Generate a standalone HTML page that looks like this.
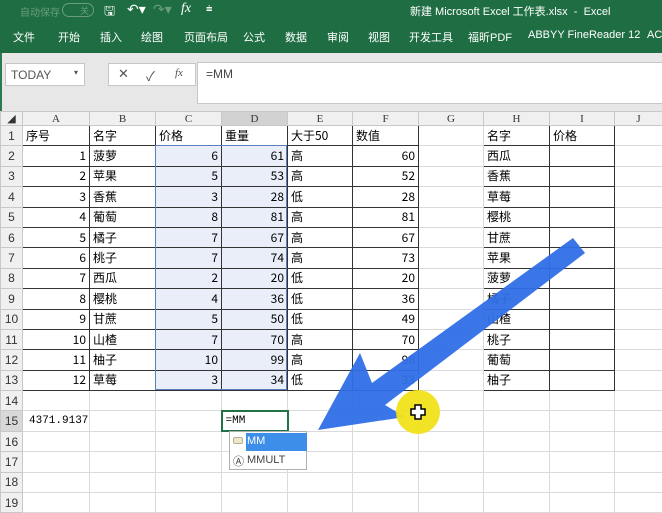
<!DOCTYPE html>
<html><head><meta charset="utf-8"><style>
*{margin:0;padding:0;box-sizing:border-box}
body{width:662px;height:511px;overflow:hidden;position:relative;background:#fff;font-family:"Liberation Sans","Noto Sans CJK SC",sans-serif}
.top{position:absolute;left:0;top:0;width:662px;height:53px;background:#1f6e43;color:#fff;font-size:11px}
.top span{position:absolute}
.fb{position:absolute;left:0;top:53px;width:662px;height:58px;background:#e7e7e7}
table{position:absolute;left:0;top:111px;width:662px;border-collapse:collapse;table-layout:fixed;font-family:"Noto Sans CJK SC",sans-serif;font-size:12px}
td{height:20.4px;border:1px solid #dadada;padding:0 3px;white-space:nowrap;overflow:hidden;line-height:18px}
tr.h td{height:14px;background:#f0f0f0;text-align:center;font-family:"Liberation Serif",serif;font-size:11px;color:#333;border-color:#c8c8c8;line-height:12px}
td.rh{background:#f0f0f0;text-align:center;font-size:12px;color:#333;font-family:"Liberation Sans",sans-serif;padding:0;border-color:#c8c8c8}
td.b{border:1px solid #333}
td.n{text-align:right}
td.s{background:#e9eef8}
</style></head><body>
<div class="top">
<span style="left:20px;top:4px;color:#6a9c7e;font-size:10px">自动保存</span>
<span style="left:62px;top:3px;width:32px;height:14px;border:1px solid #6a9c7e;border-radius:7px;color:#6a9c7e;font-size:9px;text-align:right;padding-right:4px">关</span>
<span style="left:104px;top:2px;font-size:13px">🖫</span>
<span style="left:127px;top:1px;font-size:14px">↶▾</span>
<span style="left:153px;top:1px;font-size:14px;color:#6a9c7e">↷▾</span>
<span style="left:181px;top:1px;font-size:14px;font-style:italic;font-family:'Liberation Serif',serif">fx</span>
<span style="left:206px;top:3px">⩧</span>
<span style="left:410px;top:3px">新建 Microsoft Excel 工作表.xlsx &nbsp;- &nbsp;Excel</span>
<span style="left:13px;top:29px">文件</span><span style="left:58px;top:29px">开始</span><span style="left:100px;top:29px">插入</span><span style="left:141px;top:29px">绘图</span><span style="left:184px;top:29px">页面布局</span><span style="left:243px;top:29px">公式</span><span style="left:285px;top:29px">数据</span><span style="left:327px;top:29px">审阅</span><span style="left:368px;top:29px">视图</span><span style="left:409px;top:29px">开发工具</span><span style="left:468px;top:29px">福昕PDF</span><span style="left:528px;top:29px">ABBYY FineReader 12</span><span style="left:647px;top:29px">AC</span>
</div>
<div class="fb">
<div style="position:absolute;left:5px;top:10px;width:80px;height:23px;background:#fff;border:1px solid #c6c6c6;font-size:12px;color:#555;padding:4px 5px">TODAY<span style="position:absolute;right:6px;top:4px;font-size:8px">▾</span></div>
<div style="position:absolute;left:108px;top:10px;width:88px;height:23px;background:#fff;border:1px solid #c6c6c6;font-size:13px;color:#555"><span style="position:absolute;left:9px;top:2px">✕</span><span style="position:absolute;left:37px;top:2px">✓</span><span style="position:absolute;left:66px;top:3px;font-style:italic;font-size:11px;font-family:'Liberation Serif',serif">fx</span></div>
<div style="position:absolute;left:197px;top:9px;width:470px;height:42px;background:#fff;border:1px solid #c6c6c6;font-size:12px;color:#444;padding:4px 8px">=MM</div>
</div>
<div style="position:absolute;left:0;top:53px;width:2px;height:458px;background:#2c7a4e"></div>
<table>
<colgroup><col style="width:22px"><col style="width:67px"><col style="width:66px"><col style="width:66px"><col style="width:66px"><col style="width:65px"><col style="width:66px"><col style="width:65px"><col style="width:66px"><col style="width:65px"><col style="width:48px"></colgroup>
<tr class="h"><td>◢</td><td>A</td><td>B</td><td>C</td><td style="background:#d2d2d2">D</td><td>E</td><td>F</td><td>G</td><td>H</td><td>I</td><td>J</td></tr>
<tr><td class="rh">1</td><td class="b">序号</td><td class="b">名字</td><td class="b">价格</td><td class="b">重量</td><td class="b">大于50</td><td class="b">数值</td><td></td><td class="b">名字</td><td class="b">价格</td><td></td></tr>
<tr><td class="rh">2</td><td class="b n">1</td><td class="b">菠萝</td><td class="b n s">6</td><td class="b n s">61</td><td class="b">高</td><td class="b n">60</td><td></td><td class="b">西瓜</td><td class="b"></td><td></td></tr>
<tr><td class="rh">3</td><td class="b n">2</td><td class="b">苹果</td><td class="b n s">5</td><td class="b n s">53</td><td class="b">高</td><td class="b n">52</td><td></td><td class="b">香蕉</td><td class="b"></td><td></td></tr>
<tr><td class="rh">4</td><td class="b n">3</td><td class="b">香蕉</td><td class="b n s">3</td><td class="b n s">28</td><td class="b">低</td><td class="b n">28</td><td></td><td class="b">草莓</td><td class="b"></td><td></td></tr>
<tr><td class="rh">5</td><td class="b n">4</td><td class="b">葡萄</td><td class="b n s">8</td><td class="b n s">81</td><td class="b">高</td><td class="b n">81</td><td></td><td class="b">樱桃</td><td class="b"></td><td></td></tr>
<tr><td class="rh">6</td><td class="b n">5</td><td class="b">橘子</td><td class="b n s">7</td><td class="b n s">67</td><td class="b">高</td><td class="b n">67</td><td></td><td class="b">甘蔗</td><td class="b"></td><td></td></tr>
<tr><td class="rh">7</td><td class="b n">6</td><td class="b">桃子</td><td class="b n s">7</td><td class="b n s">74</td><td class="b">高</td><td class="b n">73</td><td></td><td class="b">苹果</td><td class="b"></td><td></td></tr>
<tr><td class="rh">8</td><td class="b n">7</td><td class="b">西瓜</td><td class="b n s">2</td><td class="b n s">20</td><td class="b">低</td><td class="b n">20</td><td></td><td class="b">菠萝</td><td class="b"></td><td></td></tr>
<tr><td class="rh">9</td><td class="b n">8</td><td class="b">樱桃</td><td class="b n s">4</td><td class="b n s">36</td><td class="b">低</td><td class="b n">36</td><td></td><td class="b">橘子</td><td class="b"></td><td></td></tr>
<tr><td class="rh">10</td><td class="b n">9</td><td class="b">甘蔗</td><td class="b n s">5</td><td class="b n s">50</td><td class="b">低</td><td class="b n">49</td><td></td><td class="b">山楂</td><td class="b"></td><td></td></tr>
<tr><td class="rh">11</td><td class="b n">10</td><td class="b">山楂</td><td class="b n s">7</td><td class="b n s">70</td><td class="b">高</td><td class="b n">70</td><td></td><td class="b">桃子</td><td class="b"></td><td></td></tr>
<tr><td class="rh">12</td><td class="b n">11</td><td class="b">柚子</td><td class="b n s">10</td><td class="b n s">99</td><td class="b">高</td><td class="b n">98</td><td></td><td class="b">葡萄</td><td class="b"></td><td></td></tr>
<tr><td class="rh">13</td><td class="b n">12</td><td class="b">草莓</td><td class="b n s">3</td><td class="b n s">34</td><td class="b">低</td><td class="b n">33</td><td></td><td class="b">柚子</td><td class="b"></td><td></td></tr>
<tr><td class="rh">14</td><td></td><td></td><td></td><td></td><td></td><td></td><td></td><td></td><td></td><td></td></tr>
<tr><td class="rh" style="background:#d8d8d8">15</td><td style="font-family:'Liberation Mono',monospace;font-size:11px;padding-left:6px">4371.9137</td><td></td><td></td><td style="border:2px solid #217346;font-family:'Liberation Mono',monospace;font-size:11px">=MM</td><td></td><td></td><td></td><td></td><td></td><td></td></tr>
<tr><td class="rh">16</td><td></td><td></td><td></td><td></td><td></td><td></td><td></td><td></td><td></td><td></td></tr>
<tr><td class="rh">17</td><td></td><td></td><td></td><td></td><td></td><td></td><td></td><td></td><td></td><td></td></tr>
<tr><td class="rh">18</td><td></td><td></td><td></td><td></td><td></td><td></td><td></td><td></td><td></td><td></td></tr>
<tr><td class="rh">19</td><td></td><td></td><td></td><td></td><td></td><td></td><td></td><td></td><td></td><td></td></tr>
</table>
<div style="position:absolute;left:155px;top:145px;width:132px;height:245px;border:1px solid #5a7fbf"></div>
<div style="position:absolute;left:229px;top:431px;width:78px;height:39px;background:#fff;border:1px solid #b0b0b0;font-size:11px;color:#444">
<div style="position:absolute;left:16px;top:1px;width:61px;height:18px;background:#3d8ee8;color:#fff;padding:2px 1px">MM</div>
<div style="position:absolute;left:3px;top:5px;width:10px;height:7px;border:1px solid #b8b090;border-radius:2px;background:#eee8c8"></div>
<div style="position:absolute;left:3px;top:21px;font-size:11px">Ⓐ</div>
<div style="position:absolute;left:17px;top:22px">MMULT</div>
</div>
<svg style="position:absolute;left:0;top:0" width="662" height="511">
<polygon points="573,238 585,253 385,405 405,417 318,430 360,353 372,383" fill="#2f6fe6" opacity="0.95"/>
<circle cx="418" cy="412" r="22" fill="#f2e21a" opacity="0.95"/>
<path d="M415 405h6v4h4v6h-4v4h-6v-4h-4v-6h4z" fill="#fff" stroke="#000" stroke-width="1.5"/>
</svg>
</body></html>
